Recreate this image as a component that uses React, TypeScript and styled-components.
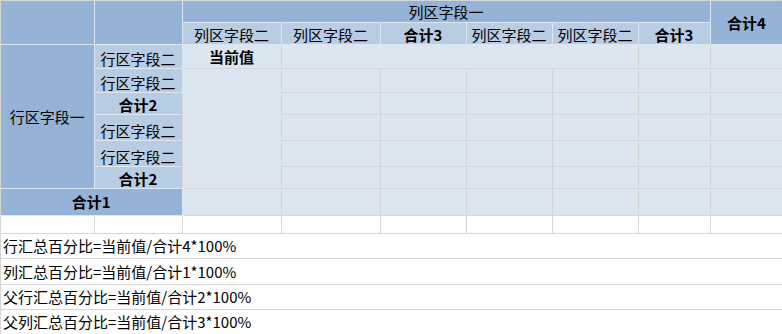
import React from 'react'
import styled, { createGlobalStyle, css } from 'styled-components'

type Tone = 'dark' | 'light' | 'data' | 'blank'

const colors = {
    dark: '#95b3d7',
    light: '#b8cce4',
    data: '#dce6f1',
    blank: '#ffffff',
    headLine: '#dde7f2',
    gridLine: '#d6d6d6',
}

const colWidths = [93, 88, 99, 99, 86, 86, 86, 72, 72]

const GlobalStyle = createGlobalStyle`
    html, body {
        margin: 0;
        padding: 0;
        background: #ffffff;
    }
    body {
        font-family: "Noto Sans CJK SC", "Noto Sans", sans-serif;
        color: #000000;
    }
`

interface CellProps {
    $tone: Tone,
    $bold?: boolean,
    $align?: 'left' | 'center',
    $valign?: 'middle' | 'bottom',
}

const Notes = [
    '行汇总百分比=当前值/合计4*100%',
    '列汇总百分比=当前值/合计1*100%',
    '父行汇总百分比=当前值/合计2*100%',
    '父列汇总百分比=当前值/合计3*100%',
]

const App: React.FC = () => {
    const dataRow = (n: number) =>
        Array.from({ length: n }).map((_, i) => <StyledCell key={i} $tone="data" />)

    return (
        <>
            <GlobalStyle />
            <StyledFrame>
                <StyledTable>
                    <colgroup>
                        {colWidths.map((w, i) => <col key={i} style={{ width: w }} />)}
                    </colgroup>
                    <tbody>
                        <StyledRow $h={21}>
                            <StyledCell $tone="dark" rowSpan={2} />
                            <StyledCell $tone="dark" rowSpan={2} />
                            <StyledCell $tone="dark" colSpan={6}>列区字段一</StyledCell>
                            <StyledCell $tone="dark" rowSpan={2} $bold>合计4</StyledCell>
                        </StyledRow>
                        <StyledRow $h={22}>
                            <StyledCell $tone="light" $valign="bottom">列区字段二</StyledCell>
                            <StyledCell $tone="light" $valign="bottom">列区字段二</StyledCell>
                            <StyledCell $tone="light" $valign="bottom" $bold>合计3</StyledCell>
                            <StyledCell $tone="light" $valign="bottom">列区字段二</StyledCell>
                            <StyledCell $tone="light" $valign="bottom">列区字段二</StyledCell>
                            <StyledCell $tone="light" $valign="bottom" $bold>合计3</StyledCell>
                        </StyledRow>
                        <StyledRow $h={24}>
                            <StyledCell $tone="dark" rowSpan={6}>行区字段一</StyledCell>
                            <StyledCell $tone="light" $valign="bottom">行区字段二</StyledCell>
                            <StyledCell $tone="data" $bold>当前值</StyledCell>
                            <StyledCell $tone="data" colSpan={4} />
                            {dataRow(2)}
                        </StyledRow>
                        <StyledRow $h={24}>
                            <StyledCell $tone="light" $valign="bottom">行区字段二</StyledCell>
                            <StyledCell $tone="data" rowSpan={5} />
                            {dataRow(6)}
                        </StyledRow>
                        <StyledRow $h={22}>
                            <StyledCell $tone="light" $valign="bottom" $bold>合计2</StyledCell>
                            {dataRow(6)}
                        </StyledRow>
                        <StyledRow $h={26}>
                            <StyledCell $tone="light" $valign="bottom">行区字段二</StyledCell>
                            {dataRow(6)}
                        </StyledRow>
                        <StyledRow $h={26}>
                            <StyledCell $tone="light" $valign="bottom">行区字段二</StyledCell>
                            {dataRow(6)}
                        </StyledRow>
                        <StyledRow $h={22}>
                            <StyledCell $tone="light" $valign="bottom" $bold>合计2</StyledCell>
                            {dataRow(6)}
                        </StyledRow>
                        <StyledRow $h={27}>
                            <StyledCell $tone="dark" colSpan={2} $bold>合计1</StyledCell>
                            {dataRow(7)}
                        </StyledRow>
                        <StyledRow $h={18}>
                            {colWidths.map((_, i) => <StyledCell key={i} $tone="blank" />)}
                        </StyledRow>
                        {Notes.map((note, i) => (
                            <StyledRow key={note} $h={i === 1 ? 26 : 25}>
                                <StyledCell $tone="blank" colSpan={9} $align="left">{note}</StyledCell>
                            </StyledRow>
                        ))}
                    </tbody>
                </StyledTable>
            </StyledFrame>
        </>
    )
}

const StyledFrame = styled.div`
    width: 780px;
    border: 1px solid ${colors.gridLine};
    border-right-color: #cfcfcf;
`

const StyledTable = styled.table`
    width: 780px;
    table-layout: fixed;
    border-collapse: collapse;
    border-style: hidden;
`

const StyledRow = styled.tr<{ $h: number }>`
    height: ${(props) => props.$h}px;
`

const StyledCell = styled.td<CellProps>`
    padding: 0 0 0 ${(props) => (props.$align === 'left' ? 2 : 0)}px;
    font-size: 15px;
    line-height: 17px;
    white-space: nowrap;
    overflow: hidden;
    text-align: ${(props) => props.$align ?? 'center'};
    vertical-align: ${(props) => props.$valign ?? 'middle'};
    font-weight: ${(props) => (props.$bold ? 700 : 400)};
    background: ${(props) => colors[props.$tone]};
    border: 1px solid ${(props) =>
        props.$tone === 'dark' || props.$tone === 'light' ? colors.headLine : colors.gridLine};
    ${(props) =>
        props.$valign === 'bottom' &&
        css`
            padding-bottom: 1px;
        `}
`

export default App
